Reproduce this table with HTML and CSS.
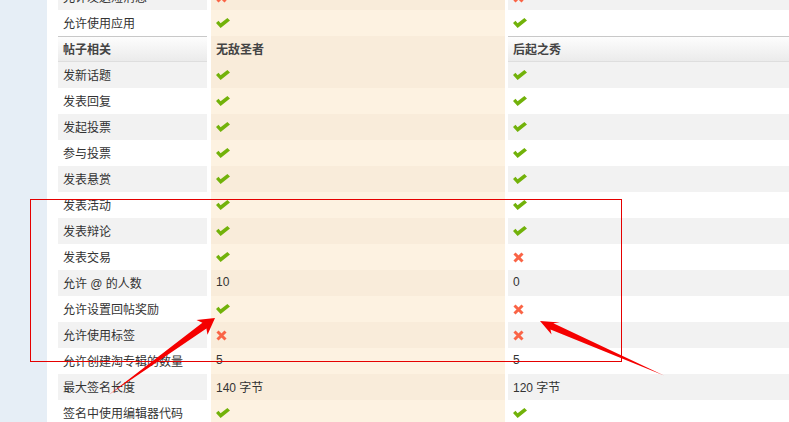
FILE: index.html
```html
<!DOCTYPE html>
<html lang="zh-CN">
<head>
    <meta charset="UTF-8">
    <title>用户组权限</title>
    <link rel="stylesheet" href="styles.css">
</head>
<body>
    <svg class="defs" width="0" height="0">
        <symbol id="i-ok" viewBox="0 0 14 10">
            <path d="M0 5 L2.5 2.8 L4.6 5.2 L11.4 0 L14 2.4 L4.6 10 Z"/>
        </symbol>
        <symbol id="i-no" viewBox="0 0 11 11">
            <path d="M1.5 1.5 L9.5 9.5 M9.5 1.5 L1.5 9.5" stroke-width="3" fill="none"/>
        </symbol>
    </svg>

    <div class="wrap">
        <div class="side"></div>
        <div class="main">
            <div class="perm">
                <div class="row alt">
                    <div class="c1">允许发送短消息</div>
                    <div class="c2"><svg class="no"><use href="#i-no"/></svg></div>
                    <div class="c3"><svg class="no"><use href="#i-no"/></svg></div>
                </div>
                <div class="row">
                    <div class="c1">允许使用应用</div>
                    <div class="c2"><svg class="ok"><use href="#i-ok"/></svg></div>
                    <div class="c3"><svg class="ok"><use href="#i-ok"/></svg></div>
                </div>
                <div class="row head">
                    <div class="c1">帖子相关</div>
                    <div class="c2">无敌圣者</div>
                    <div class="c3">后起之秀</div>
                </div>
                <div class="row alt">
                    <div class="c1">发新话题</div>
                    <div class="c2"><svg class="ok"><use href="#i-ok"/></svg></div>
                    <div class="c3"><svg class="ok"><use href="#i-ok"/></svg></div>
                </div>
                <div class="row">
                    <div class="c1">发表回复</div>
                    <div class="c2"><svg class="ok"><use href="#i-ok"/></svg></div>
                    <div class="c3"><svg class="ok"><use href="#i-ok"/></svg></div>
                </div>
                <div class="row alt">
                    <div class="c1">发起投票</div>
                    <div class="c2"><svg class="ok"><use href="#i-ok"/></svg></div>
                    <div class="c3"><svg class="ok"><use href="#i-ok"/></svg></div>
                </div>
                <div class="row">
                    <div class="c1">参与投票</div>
                    <div class="c2"><svg class="ok"><use href="#i-ok"/></svg></div>
                    <div class="c3"><svg class="ok"><use href="#i-ok"/></svg></div>
                </div>
                <div class="row alt">
                    <div class="c1">发表悬赏</div>
                    <div class="c2"><svg class="ok"><use href="#i-ok"/></svg></div>
                    <div class="c3"><svg class="ok"><use href="#i-ok"/></svg></div>
                </div>
                <div class="row">
                    <div class="c1">发表活动</div>
                    <div class="c2"><svg class="ok"><use href="#i-ok"/></svg></div>
                    <div class="c3"><svg class="ok"><use href="#i-ok"/></svg></div>
                </div>
                <div class="row alt">
                    <div class="c1">发表辩论</div>
                    <div class="c2"><svg class="ok"><use href="#i-ok"/></svg></div>
                    <div class="c3"><svg class="ok"><use href="#i-ok"/></svg></div>
                </div>
                <div class="row">
                    <div class="c1">发表交易</div>
                    <div class="c2"><svg class="ok"><use href="#i-ok"/></svg></div>
                    <div class="c3"><svg class="no"><use href="#i-no"/></svg></div>
                </div>
                <div class="row alt">
                    <div class="c1">允许 @ 的人数</div>
                    <div class="c2">10</div>
                    <div class="c3">0</div>
                </div>
                <div class="row">
                    <div class="c1">允许设置回帖奖励</div>
                    <div class="c2"><svg class="ok"><use href="#i-ok"/></svg></div>
                    <div class="c3"><svg class="no"><use href="#i-no"/></svg></div>
                </div>
                <div class="row alt">
                    <div class="c1">允许使用标签</div>
                    <div class="c2"><svg class="no"><use href="#i-no"/></svg></div>
                    <div class="c3"><svg class="no"><use href="#i-no"/></svg></div>
                </div>
                <div class="row">
                    <div class="c1">允许创建淘专辑的数量</div>
                    <div class="c2">5</div>
                    <div class="c3">5</div>
                </div>
                <div class="row alt">
                    <div class="c1">最大签名长度</div>
                    <div class="c2">140 字节</div>
                    <div class="c3">120 字节</div>
                </div>
                <div class="row">
                    <div class="c1">签名中使用编辑器代码</div>
                    <div class="c2"><svg class="ok"><use href="#i-ok"/></svg></div>
                    <div class="c3"><svg class="ok"><use href="#i-ok"/></svg></div>
                </div>
            </div>
        </div>

        <!-- screenshot markup: box + two arrows -->
        <svg class="marks" width="789" height="422" viewBox="0 0 789 422">
            <rect x="30.5" y="199.5" width="591" height="162" fill="none" stroke="#e50000"/>
            <polygon points="108.5,395 206.4,328.4 207.5,334.8 215,318 196.5,320 202.4,322.8"/>
            <polygon points="664,375.5 553.3,323.2 560,322.5 540,321 551.5,334.5 550.5,329.4"/>
        </svg>
    </div>
</body>
</html>
```

FILE: styles.css
```css
html, body {
    margin: 0;
    height: 100%;
    overflow: hidden;
}
body {
    font: 12px "Liberation Sans", "Noto Sans CJK SC", sans-serif;
    color: #333;
    background: #fff;
}
.defs {
    position: absolute;
}

.wrap {
    position: relative;
    display: flex;
    height: 100%;
}
.side {
    flex: none;
    width: 47px;
    background: #e6eef6;
}
.main {
    flex: 1;
    padding-left: 11px;
}

.perm {
    margin-top: -16px;
}
.row {
    display: grid;
    grid-template-columns: 149px 298px 1fr;
    height: 26px;
}
.row > div {
    display: flex;
    align-items: center;
    padding: 0 0 2px 5px;
    box-sizing: border-box;
    white-space: nowrap;
}
.row .c2 {
    margin-left: 4px;
    background: #fdf2e1;
}
.row .c3 {
    margin-left: 3px;
}

.alt .c1,
.alt .c3 {
    background: #f2f2f2;
}
.alt .c2 {
    background: #f9ecda;
}

.head > div {
    font-weight: bold;
    color: #444;
}
.head .c1,
.head .c3 {
    background: linear-gradient(#fdfdfd, #ebebeb);
    border-top: 1px solid #c8c8c8;
    border-bottom: 1px solid #dedede;
}
.head .c2 {
    background: #f9ecda;
}

.ok {
    width: 14px;
    height: 10px;
    margin-top: 2px;
    fill: #72b20a;
}
.no {
    width: 11px;
    height: 11px;
    margin-top: 2px;
    stroke: #fa6446;
}

.marks {
    position: absolute;
    top: 0;
    left: 0;
    fill: #f50000;
    pointer-events: none;
}
```
